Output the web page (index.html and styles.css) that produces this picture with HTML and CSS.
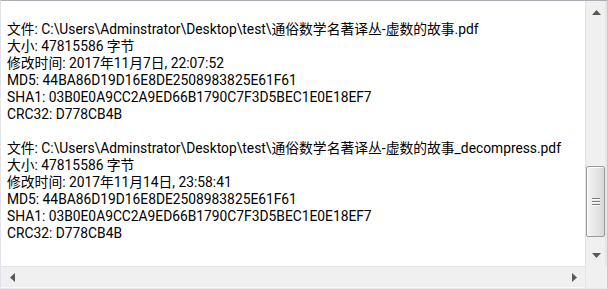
FILE: index.html
```html
<!DOCTYPE html>
<html lang="zh-CN">
<head>
    <meta charset="UTF-8">
    <title>校验结果</title>
    <link rel="stylesheet" href="styles.css">
</head>
<body>
    <div class="textbox">
        <div class="content">
            <div class="entry">
                <p>文件: C:\Users\Adminstrator\Desktop\test\通俗数学名著译丛-虚数的故事.pdf</p>
                <p>大小: 47815586 字节</p>
                <p>修改时间: 2017年11月7日, 22:07:52</p>
                <p>MD5: 44BA86D19D16E8DE2508983825E61F61</p>
                <p>SHA1: 03B0E0A9CC2A9ED66B1790C7F3D5BEC1E0E18EF7</p>
                <p>CRC32: D778CB4B</p>
            </div>
            <div class="entry">
                <p>文件: C:\Users\Adminstrator\Desktop\test\通俗数学名著译丛-虚数的故事_decompress.pdf</p>
                <p>大小: 47815586 字节</p>
                <p>修改时间: 2017年11月14日, 23:58:41</p>
                <p>MD5: 44BA86D19D16E8DE2508983825E61F61</p>
                <p>SHA1: 03B0E0A9CC2A9ED66B1790C7F3D5BEC1E0E18EF7</p>
                <p>CRC32: D778CB4B</p>
            </div>
        </div>

        <!-- 竖直滚动条 -->
        <div class="vscroll">
            <div class="sb-btn">
                <svg width="9" height="5" viewBox="0 0 9 5"><polygon points="4.5,0 9,5 0,5" class="arrow"/></svg>
            </div>
            <div class="v-track">
                <div class="v-thumb">
                    <svg width="8" height="9" viewBox="0 0 8 9">
                        <rect x="0" y="1" width="8" height="1" fill="#7a7a7a"/>
                        <rect x="0" y="4" width="8" height="1" fill="#7a7a7a"/>
                        <rect x="0" y="7" width="8" height="1" fill="#7a7a7a"/>
                        <rect x="0" y="2" width="8" height="1" fill="#fafafa"/>
                        <rect x="0" y="5" width="8" height="1" fill="#fafafa"/>
                        <rect x="0" y="8" width="8" height="1" fill="#fafafa"/>
                    </svg>
                </div>
            </div>
            <div class="sb-btn">
                <svg width="9" height="5" viewBox="0 0 9 5"><polygon points="0,0 9,0 4.5,5" class="arrow"/></svg>
            </div>
        </div>

        <!-- 水平滚动条 -->
        <div class="hscroll">
            <div class="sb-btn">
                <svg width="5" height="9" viewBox="0 0 5 9"><polygon points="0,4.5 5,0 5,9" class="arrow"/></svg>
            </div>
            <div class="h-track"></div>
            <div class="sb-btn">
                <svg width="5" height="9" viewBox="0 0 5 9"><polygon points="0,0 5,4.5 0,9" class="arrow"/></svg>
            </div>
        </div>
        <div class="corner"></div>
    </div>
</body>
</html>
```

FILE: styles.css
```css
* {margin: 0; padding: 0;}
body {
    background: #fff;
}
.textbox {
    width: 608px;
    height: 289px;
    box-sizing: border-box;
    border: 1px solid #e2e3ea;
    border-top-color: #abadb3;
    border-right-color: #c8c9cf;
    border-bottom-color: #e3e9ef;
    display: grid;
    grid-template-columns: 1fr 22px;
    grid-template-rows: 1fr 22px;
    background: #fff;
}
.content {
    padding: 20px 6px 0;
    font-family: Roboto, "Noto Sans CJK SC", sans-serif;
    font-size: 13.8px;
    line-height: 17px;
    color: #000;
    overflow: hidden;
    white-space: nowrap;
}
.entry + .entry {
    margin-top: 17px;
}

/* 滚动条 */
.vscroll {
    display: flex;
    flex-direction: column;
    background: linear-gradient(to right, #e3e3e3 0, #e3e3e3 1px, #f0f0f0 1px, #f0f0f0 20px, #e6e6e6 20px);
}
.sb-btn {
    width: 22px;
    height: 22px;
    flex: none;
    display: flex;
    align-items: center;
    justify-content: center;
}
.arrow {
    fill: #5a5a5a;
}
.v-track {
    flex: 1;
}
.v-thumb {
    margin-top: 143px;
    margin-left: 1px;
    width: 19px;
    height: 71px;
    box-sizing: border-box;
    border: 1px solid #9b9b9b;
    border-radius: 2px;
    background: linear-gradient(to right, #f4f4f4, #e8e8e8 45%, #d8d8d8);
    box-shadow: inset 1px 1px 0 #fff;
    display: flex;
    align-items: center;
    justify-content: center;
}
.hscroll {
    display: flex;
    background: linear-gradient(to bottom, #e3e3e3 0, #e3e3e3 1px, #f0f0f0 1px, #f0f0f0 21px, #fafafa 21px);
}
.h-track {
    flex: 1;
}
.corner {
    background: #f0f0f0;
    border-left: 1px solid #e6e6e6;
}
```
